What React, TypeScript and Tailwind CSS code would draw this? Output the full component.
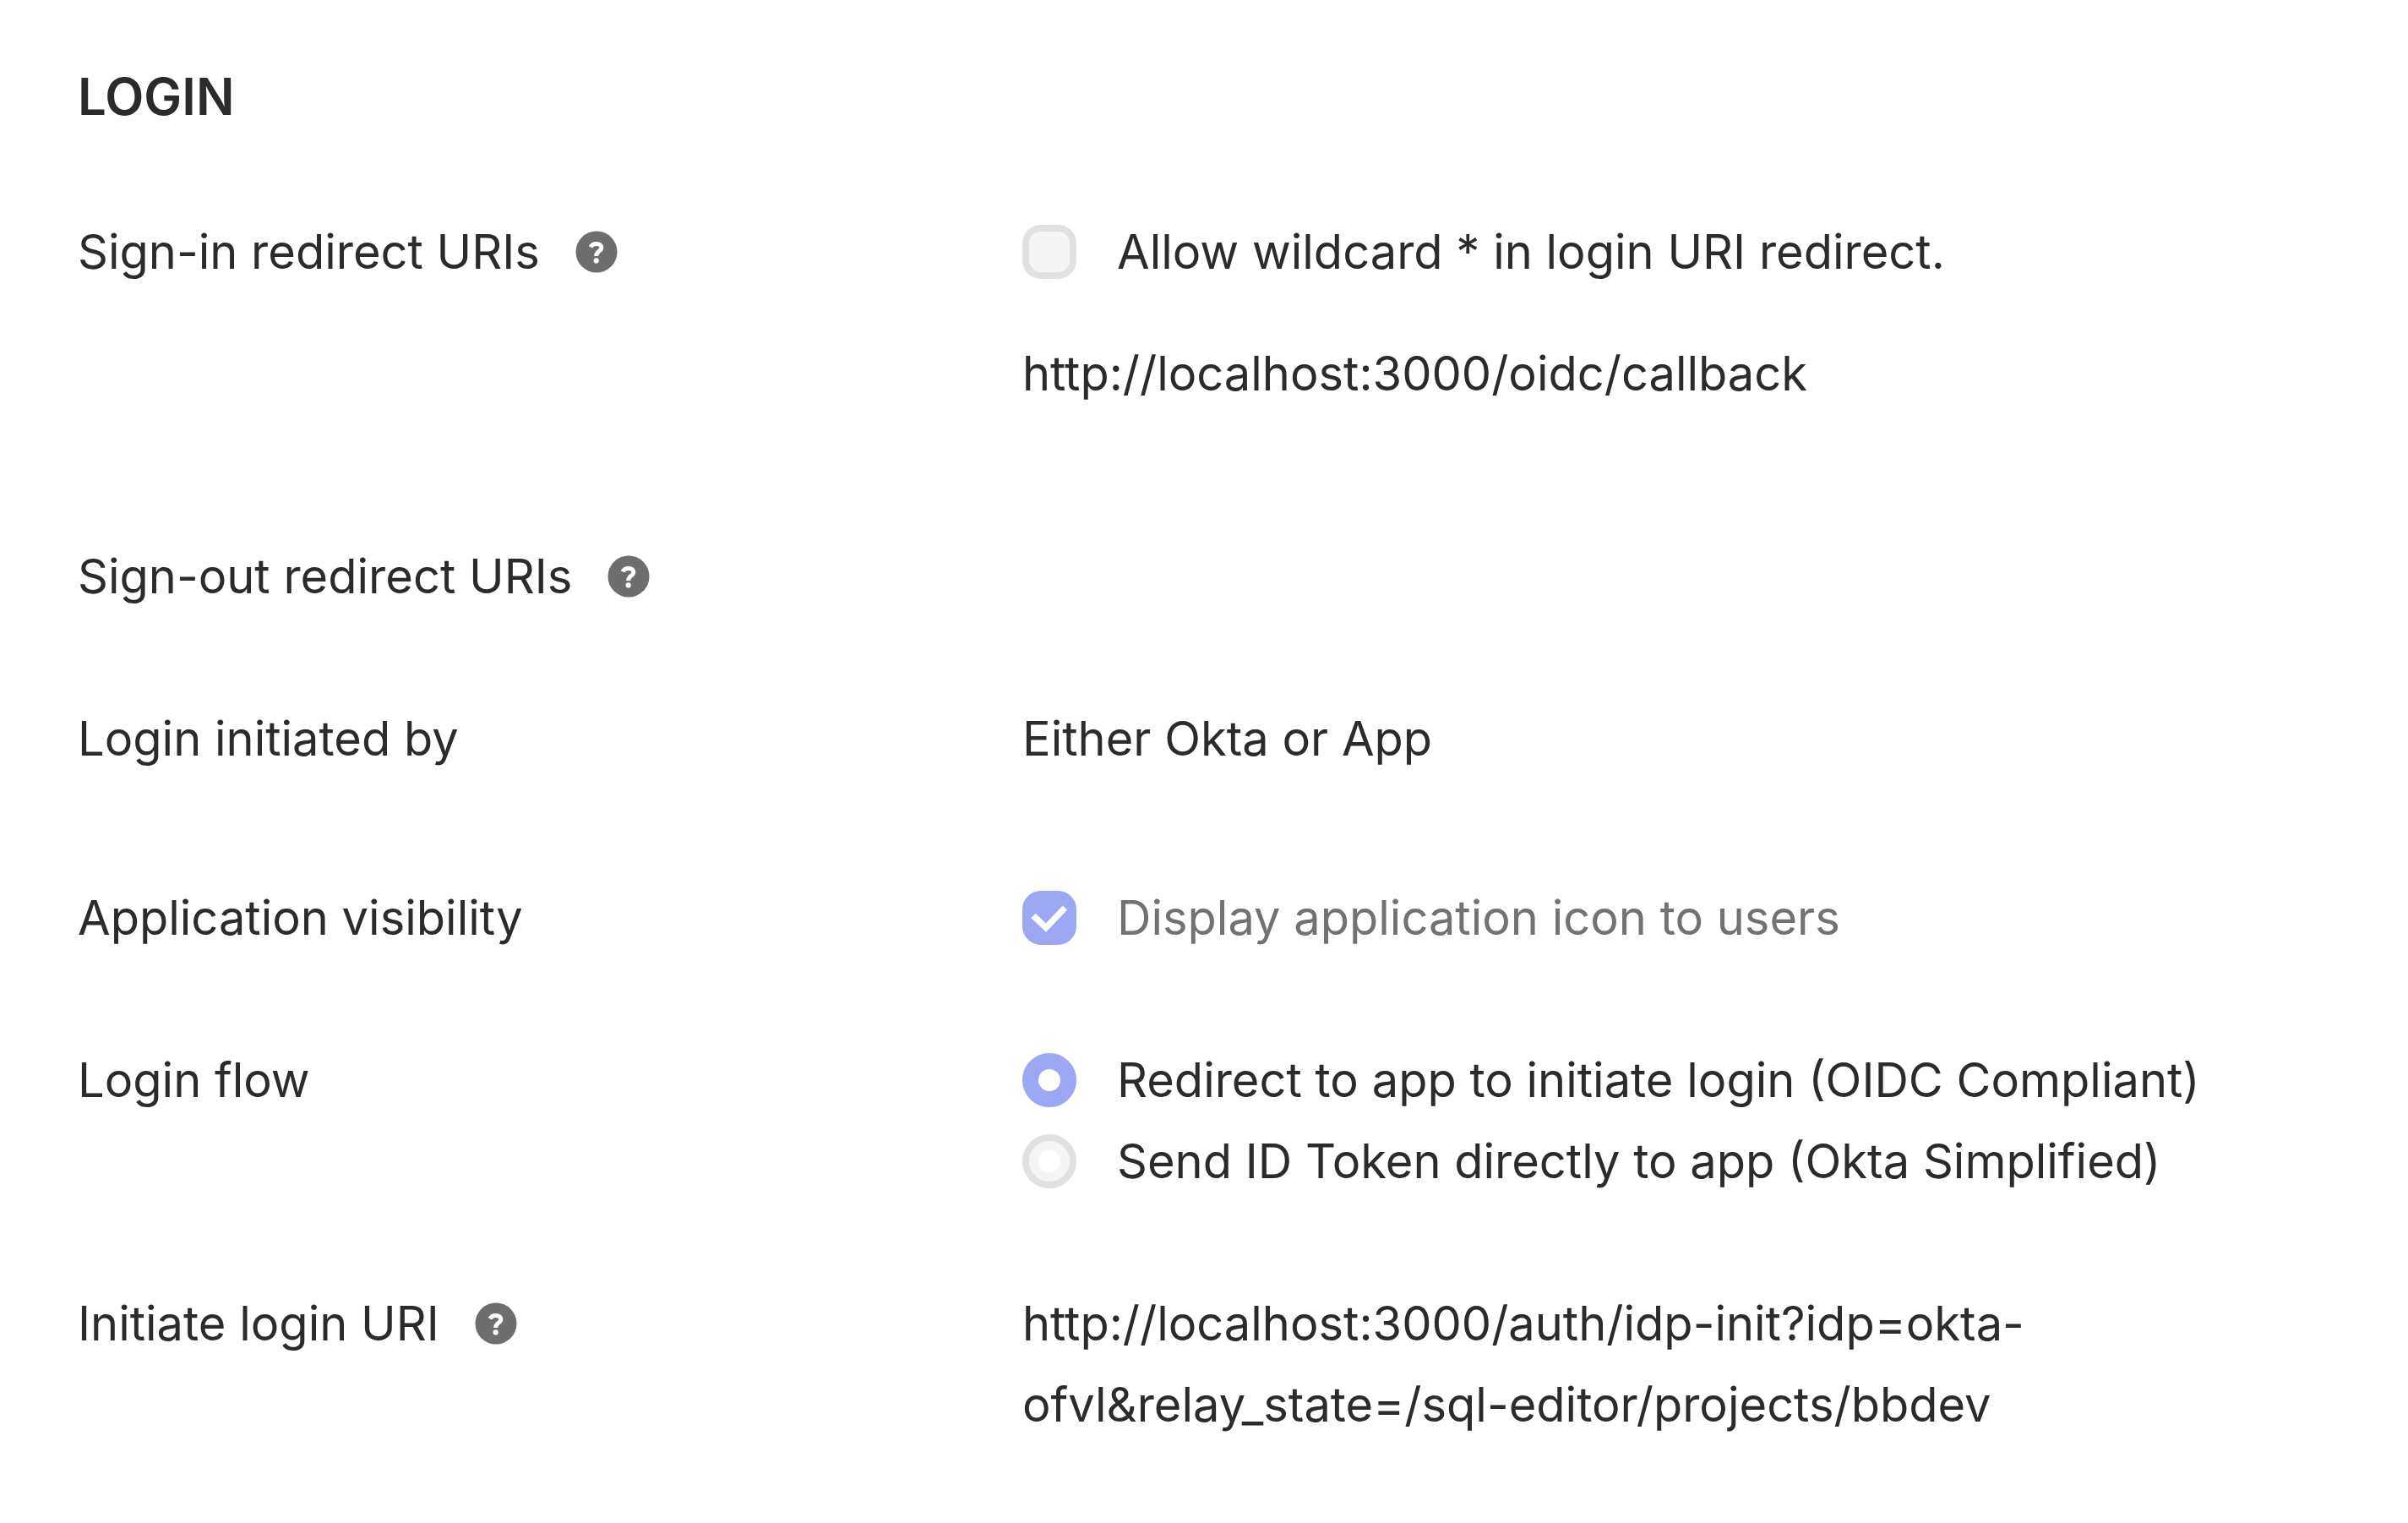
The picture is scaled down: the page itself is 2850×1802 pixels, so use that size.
import React from 'react';

interface RowProps {
  label: string;
  help?: boolean;
  className?: string;
  children?: React.ReactNode;
}

interface CheckboxProps {
  label: string;
  checked?: boolean;
}

interface RadioProps {
  label: string;
  name: string;
  value: string;
  checked?: boolean;
}

const HelpIcon = () => (
  <svg viewBox="0 0 50 50" className="size-[50px]" aria-hidden="true">
    <circle cx="25" cy="25" r="24.5" fill="#6e6e6e" />
    <path
      d="M18 19.4c1.2-2.4 3.6-3.8 6.8-3.8 3.8 0 6 1.7 6 4.4 0 4.4-6.2 4-6.2 10"
      fill="none"
      stroke="#fff"
      strokeWidth="5"
    />
    <circle cx="24.7" cy="35.4" r="3.1" fill="#fff" />
  </svg>
);

const Row = ({ label, help, className, children }: RowProps) => (
  <div className={`flex items-start ${className ?? ''}`}>
    <div className="flex w-[1118px] shrink-0 items-center gap-[42px]">
      <h3>{label}</h3>
      {help && (
        <button type="button" aria-label={`Help: ${label}`}>
          <HelpIcon />
        </button>
      )}
    </div>
    <div className="min-w-0 flex-1">{children}</div>
  </div>
);

const Checkbox = ({ label, checked }: CheckboxProps) => (
  <label className={`flex items-center gap-12 ${checked ? 'text-[#727272]' : ''}`}>
    <span className="grid shrink-0">
      <input
        type="checkbox"
        disabled
        defaultChecked={checked}
        className="col-start-1 row-start-1 size-16 appearance-none rounded-[22px] border-8 border-[#e1e1e1] bg-[#f5f5f5] checked:border-[#9ca8f2] checked:bg-[#9ca8f2]"
      />
      {checked && (
        <svg viewBox="0 0 64 64" className="col-start-1 row-start-1 size-16" aria-hidden="true">
          <path d="M13 29.5 28 43.5 50.5 20" fill="none" stroke="#fff" strokeWidth="7.5" />
        </svg>
      )}
    </span>
    {label}
  </label>
);

const Radio = ({ label, name, value, checked }: RadioProps) => (
  <label className="flex items-center gap-12">
    <input
      type="radio"
      name={name}
      value={value}
      disabled
      defaultChecked={checked}
      className="grid size-16 shrink-0 appearance-none place-items-center rounded-full border-8 border-[#e1e1e1] bg-[#f5f5f5] before:size-[26px] before:rounded-full before:bg-white checked:border-[#9ca8f2] checked:bg-[#9ca8f2]"
    />
    {label}
  </label>
);

const App = () => (
  <main className="bg-white px-[92px] pt-[66px] pb-24 font-[Inter,sans-serif] text-[56px] leading-24 text-[#2b2b2b]">
    <h2 className="text-[60px] leading-24 font-semibold">LOGIN</h2>
    <Row label="Sign-in redirect URIs" help className="mt-[88px]">
      <Checkbox label="Allow wildcard * in login URI redirect." />
      <p className="mt-12">http://localhost:3000/oidc/callback</p>
    </Row>
    <Row label="Sign-out redirect URIs" help className="mt-36" />
    <Row label="Login initiated by" className="mt-24">
      <p>Either Okta or App</p>
    </Row>
    <Row label="Application visibility" className="mt-29">
      <Checkbox label="Display application icon to users" checked />
    </Row>
    <Row label="Login flow" className="mt-24">
      <Radio name="login-flow" value="redirect" label="Redirect to app to initiate login (OIDC Compliant)" checked />
      <Radio name="login-flow" value="token" label="Send ID Token directly to app (Okta Simplified)" />
    </Row>
    <Row label="Initiate login URI" help className="mt-24">
      <p>http://localhost:3000/auth/idp-init?idp=okta-ofvl&relay_state=/sql-editor/projects/bbdev</p>
    </Row>
  </main>
);

export default App;
